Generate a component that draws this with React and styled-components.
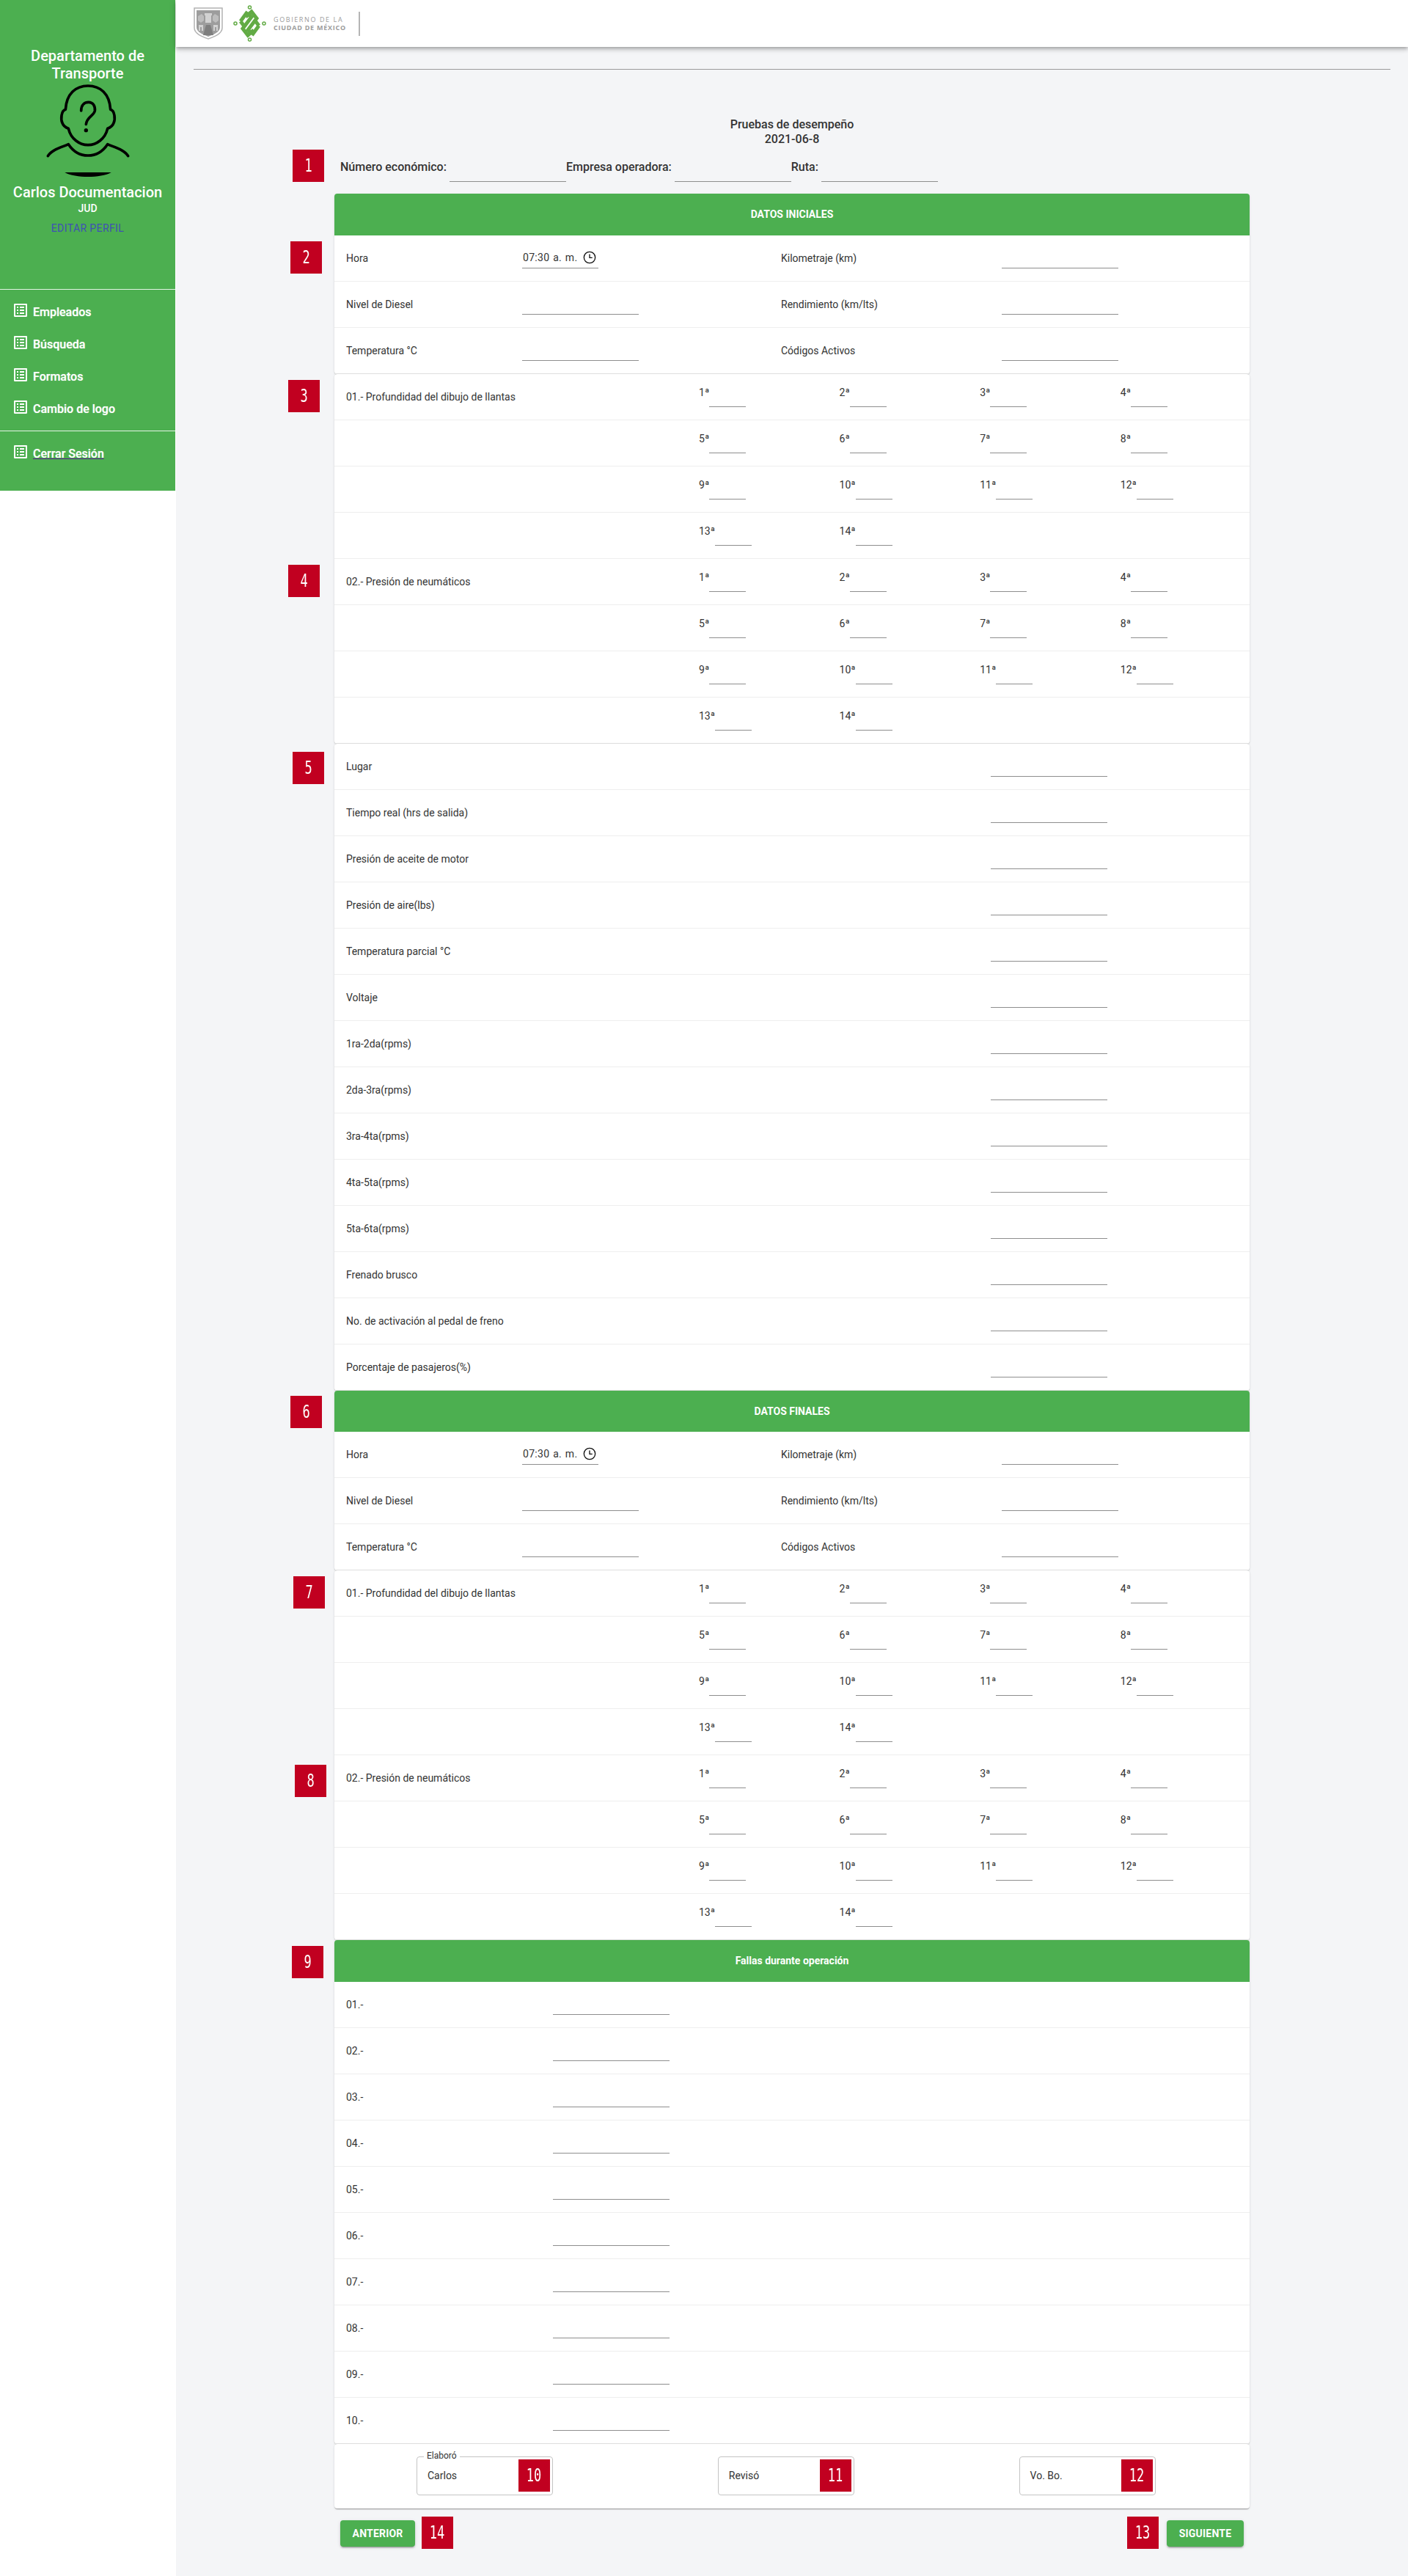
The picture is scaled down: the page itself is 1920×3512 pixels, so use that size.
import React from "react";
import styled, { createGlobalStyle } from "styled-components";

const GREEN = "#4caf50";
const TEXT = "#333";

const GlobalStyle = createGlobalStyle`
  html, body {
    margin: 0;
    padding: 0;
    background: #fff;
    font-family: Roboto, "Liberation Sans", sans-serif;
    color: ${TEXT};
  }
  * { box-sizing: border-box; }
`;

const Page = styled.div`
  display: flex;
  min-height: 3512px;
  align-items: stretch;
`;

const Sidebar = styled.aside`
  width: 240px;
  height: 669px;
  flex: none;
  background: ${GREEN};
  border-right: 1px solid #fff;
  padding-top: 64px;
  color: #fff;
  text-align: center;
`;

const OrgName = styled.div`
  font-size: 20px;
  font-weight: 500;
  line-height: 24px;
  padding: 0 8px;
`;

const Avatar = styled.svg`
  display: block;
  width: 126px;
  height: 126px;
  margin: 3px auto 0;
`;

const UserName = styled.div`
  font-size: 20px;
  font-weight: 500;
  line-height: 24px;
  margin-top: 9px;
`;

const UserRole = styled.div`
  font-size: 14px;
  font-weight: 500;
  line-height: 20px;
`;

const EditLink = styled.div`
  font-size: 14px;
  line-height: 20px;
  margin-top: 7px;
  color: #3f51b5;
  letter-spacing: 0.4px;
`;

const SideDivider = styled.div`
  height: 1px;
  background: rgba(255, 255, 255, 0.85);
  margin-top: ${({ $top }) => $top || 0}px;
`;

const SideList = styled.nav`
  padding: 8px 0;
`;

const SideItem = styled.div`
  display: flex;
  align-items: center;
  height: 44px;
  padding-left: 16px;
  gap: 5px;
  font-size: 16px;
  font-weight: 500;
  text-align: left;
  span {
    text-decoration: ${({ $link }) => ($link ? "underline" : "none")};
    text-decoration-color: #551a8b;
    text-shadow: 0 0 1px rgba(255, 255, 255, 0.6);
  }
  svg {
    margin-top: -4px;
  }
`;

const Main = styled.main`
  flex: 1;
  min-width: 0;
  background: #f4f5f7;
`;

const Topbar = styled.header`
  display: flex;
  align-items: center;
  height: 64px;
  padding-left: 24px;
  background: #fff;
  box-shadow: 0 2px 4px -1px rgba(0, 0, 0, 0.2), 0 4px 5px rgba(0, 0, 0, 0.14), 0 1px 10px rgba(0, 0, 0, 0.12);
`;

const LogoGap = styled.div`
  width: 14px;
`;

const BrandText = styled.div`
  margin-left: 10px;
  font-family: "Open Sans", sans-serif;
  font-size: 9px;
  line-height: 11px;
  color: #9c9c9c;
  white-space: nowrap;
  div:first-child { letter-spacing: 1.6px; }
  div:last-child { font-weight: 700; letter-spacing: 0.75px; }
`;

const BrandRule = styled.div`
  width: 2px;
  height: 33px;
  margin-left: 17px;
  background: #b5b5b5;
`;

const Content = styled.div`
  padding: 30px 24px 40px;
`;

const TopRule = styled.div`
  height: 1px;
  background: #9a9a9a;
`;

const Sheet = styled.div`
  width: 1248px;
  margin: 65px auto 0;
`;

const Title = styled.div`
  text-align: center;
  font-size: 16px;
  font-weight: 500;
  line-height: 20px;
`;

const InfoRow = styled.div`
  position: relative;
  display: flex;
  height: 40px;
  margin: 8px 0 16px;
  padding-left: 8px;
`;

const InfoLabel = styled.span`
  font-size: 16px;
  font-weight: 500;
  line-height: 40px;
  margin-right: 4px;
  white-space: nowrap;
`;

const Line = styled.div`
  width: ${({ $w }) => $w || 159}px;
  height: 45px;
  border-bottom: 1px solid #8e8e8e;
`;

const InfoLine = styled(Line)`
  height: 40px;
`;

const Card = styled.section`
  position: relative;
  background: #fff;
  border-radius: 4px;
  box-shadow: 0 2px 1px -1px rgba(0, 0, 0, 0.2), 0 1px 1px rgba(0, 0, 0, 0.14), 0 1px 3px rgba(0, 0, 0, 0.12);
`;

const CardHead = styled.div`
  display: flex;
  align-items: center;
  justify-content: center;
  height: 56.5px;
  background: ${GREEN};
  color: #fff;
  font-size: 14px;
  font-weight: 700;
  border-radius: 4px 4px 0 0;
`;

const Row = styled.div`
  display: grid;
  grid-template-columns: ${({ $cols }) => $cols};
  height: 63px;
  padding-left: 16px;
  font-size: 14px;
  border-bottom: 1px solid #eeeeee;
  &:last-child {
    border-bottom-color: #e2e2e2;
  }
`;

const RowText = styled.div`
  line-height: 63px;
`;

const TireCell = styled.div`
  display: flex;
  line-height: 51px;
`;

const TimeField = styled.div`
  display: flex;
  align-items: center;
  justify-content: space-between;
  width: 104px;
  height: 45px;
  padding: 16px 2px 0 1px;
  line-height: 20px;
  border-bottom: 1px solid #8e8e8e;
  span {
    word-spacing: 1px;
    letter-spacing: 0.3px;
  }
`;

const Signatures = styled.div`
  display: flex;
  gap: 224.8px;
  height: 88px;
  padding: 17px 0 0 112px;
`;

const SignField = styled.div`
  position: relative;
  width: 186px;
  height: 53px;
  padding-left: 14px;
  border: 1px solid #c4c4c4;
  border-radius: 4px;
  font-size: 14px;
  line-height: 51px;
`;

const SignLegend = styled.span`
  position: absolute;
  left: 9px;
  top: -9px;
  padding: 0 4px;
  background: #fff;
  font-size: 12px;
  line-height: 14px;
`;

const Footer = styled.div`
  display: flex;
  justify-content: space-between;
  margin-top: 16px;
  padding: 0 8px;
`;

const ButtonWrap = styled.div`
  position: relative;
`;

const ActionButton = styled.button`
  display: block;
  width: ${({ $w }) => $w}px;
  height: 36px;
  padding: 0;
  border: none;
  border-radius: 4px;
  background: ${GREEN};
  color: #fff;
  font-family: Roboto, sans-serif;
  font-size: 14px;
  font-weight: 700;
  letter-spacing: 0.2px;
  box-shadow: 0 3px 1px -2px rgba(0, 0, 0, 0.2), 0 2px 2px rgba(0, 0, 0, 0.14), 0 1px 5px rgba(0, 0, 0, 0.12);
`;

const BadgeBox = styled.div`
  position: absolute;
  left: ${({ $x }) => ($x === undefined ? "auto" : `${$x}px`)};
  right: ${({ $r }) => ($r === undefined ? "auto" : `${$r}px`)};
  top: ${({ $y }) => $y}px;
  display: flex;
  align-items: center;
  justify-content: center;
  width: 43px;
  height: 44px;
  background: #c10020;
  color: #fff;
  font-family: "DejaVu Sans Mono", "Liberation Mono", monospace;
  font-size: 25px;
  line-height: 44px;
  z-index: 2;
  span {
    display: block;
    transform: scaleX(0.68);
  }
`;

const Badge = ({ n, x, r, y }) => (
  <BadgeBox $x={x} $r={r} $y={y}>
    <span>{n}</span>
  </BadgeBox>
);

const ListIcon = () => (
  <svg width="24" height="24" viewBox="0 0 24 24" fill="#fff">
    <path d="M19 5v14H5V5h14m1.1-2H3.9c-.5 0-.9.4-.9.9v16.2c0 .4.4.9.9.9h16.2c.4 0 .9-.5.9-.9V3.9c0-.5-.5-.9-.9-.9zM11 7h6v2h-6V7zm0 4h6v2h-6v-2zm0 4h6v2h-6zM7 7h2v2H7zm0 4h2v2H7zm0 4h2v2H7z" />
  </svg>
);

const ClockIcon = () => (
  <svg width="20" height="20" viewBox="0 0 24 24" fill="none" stroke="#111" strokeWidth="1.6">
    <circle cx="12" cy="12" r="9.2" />
    <path d="M12 6.5V12.5H16.5" />
  </svg>
);

const Shield = () => (
  <svg width="40" height="44" viewBox="0 0 40 44">
    <path d="M1 1H39V28C39 36 28 40 20 43C12 40 1 36 1 28Z" fill="#fff" stroke="#b3b3b3" strokeWidth="1.5" />
    <path d="M4 4H36V27C36 34 27 37 20 40C13 37 4 34 4 27Z" fill="#9d9d9d" />
    <path d="M15 8h10v3h-1v10h-8V11h-1z" fill="#d2d2d2" />
    <path d="M6 12l5-3 3 3v6l-4 3-4-3zM34 12l-5-3-3 3v6l4 3 4-3z" fill="#bdbdbd" />
    <path d="M17 24h6l4 14h-14z" fill="#7e7e7e" />
    <path d="M7 24h6v8h-2v-5h-2v5H7zM27 24h6v8h-2v-5h-2v5h-2z" fill="#d2d2d2" />
  </svg>
);

const CdmxLogo = () => (
  <svg width="45" height="50" viewBox="0 0 45 50" fill="none" stroke="#62ab45">
    <g strokeWidth="1.5">
      <circle cx="22.5" cy="3" r="2" />
      <circle cx="3" cy="25" r="2" />
      <circle cx="42" cy="25" r="2" />
      <circle cx="22.5" cy="47" r="2" />
    </g>
    <g strokeWidth="5" strokeLinejoin="miter">
      <path d="M10 22L18 11L25 16L13 32L20 41L28 34" />
      <path d="M35 28L27 39L20 34L32 18L25 9L17 16" />
      <path d="M10 22L16 30M35 28L29 20" />
    </g>
  </svg>
);

const FaceIcon = () => (
  <Avatar viewBox="21 27 378 378">
    <g fill="none" stroke="#000" strokeWidth="11" strokeLinecap="round" strokeLinejoin="round">
      <path d="M210 33C160 33 122 65 118 130C100 135 98 170 105 185C110 200 122 205 130 208C140 250 175 275 210 275C245 275 280 250 290 208C298 205 310 200 315 185C322 170 320 135 302 130C298 65 260 33 210 33Z" />
      <path d="M182 135C182 110 197 100 212 100C232 100 240 118 238 135C235 155 205 160 202 190" />
      <path d="M46 320C60 295 100 285 130 272C150 302 175 318 210 318C245 318 270 302 290 272C320 285 360 295 374 320" />
    </g>
    <circle cx="202" cy="215" r="8" fill="#000" />
    <path d="M115 387H305C285 400 245 405 210 405C175 405 135 400 115 387Z" fill="#000" />
  </Avatar>
);

const PAIR_COLS = "240px 353px 301px 1fr";
const TIRE_COLS = "481px repeat(4, 191.6px)";
const METRIC_COLS = "879px 1fr";
const FAULT_COLS = "282px 1fr";

const metrics = [
  "Lugar",
  "Tiempo real (hrs de salida)",
  "Presión de aceite de motor",
  "Presión de aire(lbs)",
  "Temperatura parcial °C",
  "Voltaje",
  "1ra-2da(rpms)",
  "2da-3ra(rpms)",
  "3ra-4ta(rpms)",
  "4ta-5ta(rpms)",
  "5ta-6ta(rpms)",
  "Frenado brusco",
  "No. de activación al pedal de freno",
  "Porcentaje de pasajeros(%)",
];

const tireRows = [
  [1, 2, 3, 4],
  [5, 6, 7, 8],
  [9, 10, 11, 12],
  [13, 14],
];

const menu = ["Empleados", "Búsqueda", "Formatos", "Cambio de logo"];
const faults = ["01", "02", "03", "04", "05", "06", "07", "08", "09", "10"];

const PairRows = () => (
  <>
    <Row $cols={PAIR_COLS}>
      <RowText>Hora</RowText>
      <TimeField>
        <span>07:30 a. m.</span>
        <ClockIcon />
      </TimeField>
      <RowText>Kilometraje (km)</RowText>
      <Line />
    </Row>
    <Row $cols={PAIR_COLS}>
      <RowText>Nivel de Diesel</RowText>
      <Line />
      <RowText>Rendimiento (km/lts)</RowText>
      <Line />
    </Row>
    <Row $cols={PAIR_COLS}>
      <RowText>Temperatura °C</RowText>
      <Line />
      <RowText>Códigos Activos</RowText>
      <Line />
    </Row>
  </>
);

const TireGroup = ({ title }) =>
  tireRows.map((tires, i) => (
    <Row $cols={TIRE_COLS} key={i}>
      <RowText>{i === 0 ? title : ""}</RowText>
      {tires.map((t) => (
        <TireCell key={t}>
          {t}ª
          <Line $w={50} />
        </TireCell>
      ))}
    </Row>
  ));

const App = () => (
  <Page>
    <GlobalStyle />
    <Sidebar>
      <OrgName>Departamento de Transporte</OrgName>
      <FaceIcon />
      <UserName>Carlos Documentacion</UserName>
      <UserRole>JUD</UserRole>
      <EditLink>EDITAR PERFIL</EditLink>
      <SideDivider $top={73} />
      <SideList>
        {menu.map((m) => (
          <SideItem key={m}>
            <ListIcon />
            <span>{m}</span>
          </SideItem>
        ))}
      </SideList>
      <SideDivider />
      <SideList>
        <SideItem $link>
          <ListIcon />
          <span>Cerrar Sesión</span>
        </SideItem>
      </SideList>
    </Sidebar>
    <Main>
      <Topbar>
        <Shield />
        <LogoGap />
        <CdmxLogo />
        <BrandText>
          <div>GOBIERNO DE LA</div>
          <div>CIUDAD DE MÉXICO</div>
        </BrandText>
        <BrandRule />
      </Topbar>
      <Content>
        <TopRule />
        <Sheet>
          <Title>
            Pruebas de desempeño
            <br />
            2021-06-8
          </Title>
          <InfoRow>
            <Badge n="1" x={-57} y={-4} />
            <InfoLabel>Número económico:</InfoLabel>
            <InfoLine />
            <InfoLabel>Empresa operadora:</InfoLabel>
            <InfoLine />
            <InfoLabel>Ruta:</InfoLabel>
            <InfoLine />
          </InfoRow>

          <Card>
            <Badge n="2" x={-60} y={65} />
            <CardHead>DATOS INICIALES</CardHead>
            <PairRows />
          </Card>
          <Card>
            <Badge n="3" x={-63} y={8} />
            <Badge n="4" x={-63} y={260.5} />
            <TireGroup title="01.- Profundidad del dibujo de llantas" />
            <TireGroup title="02.- Presión de neumáticos" />
          </Card>
          <Card>
            <Badge n="5" x={-57} y={11.5} />
            {metrics.map((m) => (
              <Row $cols={METRIC_COLS} key={m}>
                <RowText>{m}</RowText>
                <Line />
              </Row>
            ))}
          </Card>
          <Card>
            <Badge n="6" x={-60} y={7.5} />
            <CardHead>DATOS FINALES</CardHead>
            <PairRows />
          </Card>
          <Card>
            <Badge n="7" x={-56} y={7.5} />
            <Badge n="8" x={-54} y={264.5} />
            <TireGroup title="01.- Profundidad del dibujo de llantas" />
            <TireGroup title="02.- Presión de neumáticos" />
          </Card>
          <Card>
            <Badge n="9" x={-58} y={7.5} />
            <CardHead>Fallas durante operación</CardHead>
            {faults.map((f) => (
              <Row $cols={FAULT_COLS} key={f}>
                <RowText>{f}.-</RowText>
                <Line />
              </Row>
            ))}
          </Card>
          <Card>
            <Signatures>
              <SignField>
                <SignLegend>Elaboró</SignLegend>
                Carlos
                <Badge n="10" r={3} y={3} />
              </SignField>
              <SignField>
                Revisó
                <Badge n="11" r={3} y={3} />
              </SignField>
              <SignField>
                Vo. Bo.
                <Badge n="12" r={3} y={3} />
              </SignField>
            </Signatures>
          </Card>
          <Footer>
            <ButtonWrap>
              <ActionButton $w={102}>ANTERIOR</ActionButton>
              <Badge n="14" x={111} y={-5} />
            </ButtonWrap>
            <ButtonWrap>
              <ActionButton $w={105}>SIGUIENTE</ActionButton>
              <Badge n="13" x={-54} y={-5} />
            </ButtonWrap>
          </Footer>
        </Sheet>
      </Content>
    </Main>
  </Page>
);

export default App;
